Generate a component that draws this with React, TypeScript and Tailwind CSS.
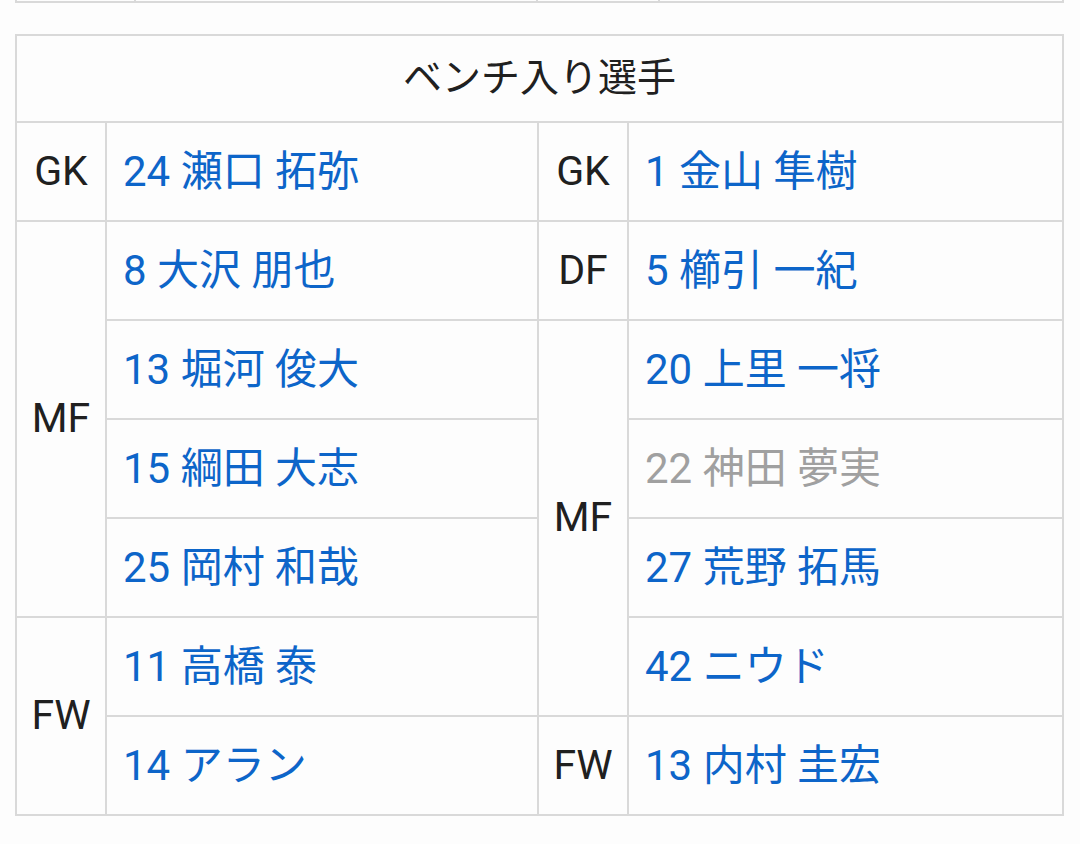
const font = { fontFamily: "Roboto, 'Noto Sans CJK JP', sans-serif" };

type Player = { label: string; muted?: boolean };

const left: Player[] = [
  { label: "24 瀬口 拓弥" },
  { label: "8 大沢 朋也" },
  { label: "13 堀河 俊大" },
  { label: "15 綱田 大志" },
  { label: "25 岡村 和哉" },
  { label: "11 高橋 泰" },
  { label: "14 アラン" },
];

const right: Player[] = [
  { label: "1 金山 隼樹" },
  { label: "5 櫛引 一紀" },
  { label: "20 上里 一将" },
  { label: "22 神田 夢実", muted: true },
  { label: "27 荒野 拓馬" },
  { label: "42 ニウド" },
  { label: "13 内村 圭宏" },
];

function Pos({ text, className }: { text: string; className: string }) {
  return (
    <div className={`bg-[#fdfdfd] flex items-center justify-center text-[41px] text-[#202020] ${className}`}>
      {text}
    </div>
  );
}

function Name({ p, className }: { p: Player; className: string }) {
  return (
    <div
      className={`bg-[#fdfdfd] flex items-center pl-4 text-[42px] whitespace-nowrap ${
        p.muted ? "text-[#a0a0a0]" : "text-[#0d65c9]"
      } ${className}`}
    >
      {p.label}
    </div>
  );
}

export default function App() {
  return (
    <div className="min-h-screen w-[1080px] bg-[#fdfdfd]" style={font}>
      {/* tail of the previous table */}
      <div className="ml-[15px] w-[1049px] grid grid-cols-[117px_400px_120px_402px] gap-x-[2px] px-[2px] pb-[2px] bg-[#d9d9d9]">
        <div className="h-px bg-[#fdfdfd]" />
        <div className="h-px bg-[#fdfdfd]" />
        <div className="h-px bg-[#fdfdfd]" />
        <div className="h-px bg-[#fdfdfd]" />
      </div>

      <div className="mt-[31px] ml-[15px] w-[1049px] grid grid-cols-[88px_430px_88px_433px] grid-rows-[85px_repeat(7,97px)] gap-[2px] p-[2px] bg-[#d9d9d9]">
        <div className="col-span-4 bg-[#fdfdfd] flex items-center justify-center text-[39px] text-[#202020]">
          ベンチ入り選手
        </div>

        {/* row 1 */}
        <Pos text="GK" className="col-start-1 row-start-2" />
        <Name p={left[0]} className="col-start-2 row-start-2" />
        <Pos text="GK" className="col-start-3 row-start-2" />
        <Name p={right[0]} className="col-start-4 row-start-2" />

        {/* left side */}
        <Pos text="MF" className="col-start-1 row-start-3 row-span-4" />
        <Pos text="FW" className="col-start-1 row-start-7 row-span-2" />
        <Name p={left[1]} className="col-start-2 row-start-3" />
        <Name p={left[2]} className="col-start-2 row-start-4" />
        <Name p={left[3]} className="col-start-2 row-start-5" />
        <Name p={left[4]} className="col-start-2 row-start-6" />
        <Name p={left[5]} className="col-start-2 row-start-7" />
        <Name p={left[6]} className="col-start-2 row-start-8" />

        {/* right side */}
        <Pos text="DF" className="col-start-3 row-start-3" />
        <Pos text="MF" className="col-start-3 row-start-4 row-span-4" />
        <Pos text="FW" className="col-start-3 row-start-8" />
        <Name p={right[1]} className="col-start-4 row-start-3" />
        <Name p={right[2]} className="col-start-4 row-start-4" />
        <Name p={right[3]} className="col-start-4 row-start-5" />
        <Name p={right[4]} className="col-start-4 row-start-6" />
        <Name p={right[5]} className="col-start-4 row-start-7" />
        <Name p={right[6]} className="col-start-4 row-start-8" />
      </div>
    </div>
  );
}
